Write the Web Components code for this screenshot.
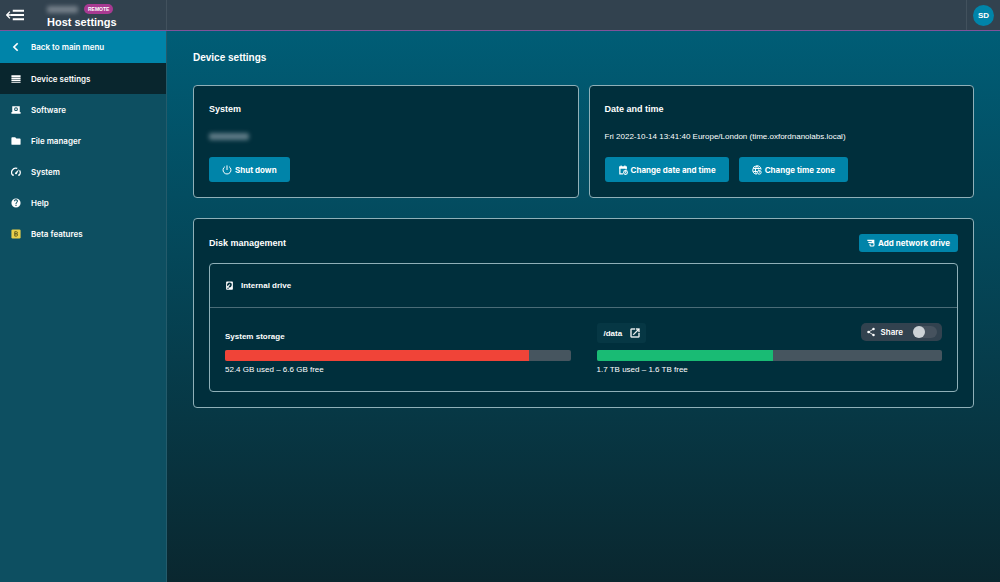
<!DOCTYPE html>
<html lang="en">
<head>
<meta charset="utf-8">
<meta name="viewport" content="width=device-width, initial-scale=1">
<title>Host settings</title>
<style>
    html, body {
        margin: 0;
        min-height: 100%;
    }

    body {
        font-family: "Liberation Sans", Arial, sans-serif;
        font-size: 9px;
        color: #fff;
        background: #0a2a33;
        --accent: #0084a9;
        --panel: #002f3c;
        --line: #8fb0b8;
        --slate: #32424f;
        --label-font: 600 8px/12px Inter, "Liberation Sans", sans-serif;
    }
</style>
</head>
<body>
<app-shell>
    <top-bar slot="header" user="SD" badge="Remote">Host settings</top-bar>

    <side-nav slot="nav">
        <nav-item icon="back" variant="back" href="#menu">Back to main menu</nav-item>
        <nav-item icon="list" variant="active" href="#device">Device settings</nav-item>
        <nav-item icon="laptop" href="#software">Software</nav-item>
        <nav-item icon="folder" href="#files">File manager</nav-item>
        <nav-item icon="gauge" href="#system">System</nav-item>
        <nav-item icon="help" href="#help">Help</nav-item>
        <nav-item icon="beta" href="#beta">Beta features</nav-item>
    </side-nav>

    <settings-page>
        <span slot="title">Device settings</span>

        <panel-card slot="top">
            <span slot="title">System</span>
            <redacted-text></redacted-text>
            <action-button slot="footer" icon="power">Shut down</action-button>
        </panel-card>

        <panel-card slot="top">
            <span slot="title">Date and time</span>
            Fri 2022-10-14 13:41:40 Europe/London (time.oxfordnanolabs.local)
            <action-button slot="footer" icon="calendar">Change date and time</action-button>
            <action-button slot="footer" icon="globe">Change time zone</action-button>
        </panel-card>

        <disk-panel>
            <span slot="title">Disk management</span>
            <action-button slot="action" icon="addDrive" compact>Add network drive</action-button>
            <drive-box>
                <span slot="name">Internal drive</span>
                <storage-volume used="88" color="#f04438" usage="52.4 GB used – 6.6 GB free">
                    <span slot="name">System storage</span>
                </storage-volume>
                <storage-volume used="51" color="#19bb74" usage="1.7 TB used – 1.6 TB free">
                    <path-link slot="name" href="#data">/data</path-link>
                    <share-toggle slot="action">Share</share-toggle>
                </storage-volume>
            </drive-box>
        </disk-panel>
    </settings-page>
</app-shell>

<script>
const ICONS = {
    menu: '<path d="M9 5h15v2.600H9zM6.500 10.700H24v2.600H6.500zM9 16.400h15V19H9z"/><path d="M5.200 7.500 1 12l4.200 4.500M1 12h8" fill="none" stroke="currentColor" stroke-width="1.800"/>',
    back: '<path d="M16 3 7 12l9 9" fill="none" stroke="currentColor" stroke-width="4"/>',
    list: '<path d="M1 3h22v4H1zM1 8.500h22v4H1zM1 14h22v3H1zM1 18.500h22V21H1z"/>',
    laptop: '<path fill-rule="evenodd" d="M3 3h18v14h2v4H1v-4h2zM12 5.500a4.500 4.500 0 1 0 0 9 4.500 4.500 0 0 0 0-9zm0 2.500a2 2 0 1 1 0 4 2 2 0 0 1 0-4z"/>',
    folder: '<path d="M3 3h7l3 3h8a2 2 0 0 1 2 2v11a2 2 0 0 1-2 2H3a2 2 0 0 1-2-2V5a2 2 0 0 1 2-2z"/>',
    gauge: '<path d="M4.500 20A10 10 0 0 1 15 3.500M20.500 8a10 10 0 0 1-1 12" fill="none" stroke="currentColor" stroke-width="3"/><path d="M19.500 4.500 14 16.500a2.500 2.500 0 1 1-4-3z"/><path d="M3 18h4v3H4zM17 18h4l-1 3h-3z"/>',
    help: '<path d="M12 1a11 11 0 1 0 0 22 11 11 0 0 0 0-22zm1.300 18h-2.600v-2.600h2.600zm2.600-9.200-1.100 1.100c-.9.900-1.500 1.700-1.500 3.700h-2.600V14c0-1.400.6-2.500 1.500-3.400l1.400-1.400a2.100 2.100 0 1 0-3.700-1.500H7.400a4.600 4.600 0 1 1 8.500 2.100z"/>',
    beta: '<rect x="1" y="1" width="22" height="22" rx="3" fill="#e8cf4a"/><path d="M9 6.500h4a2.500 2.500 0 0 1 0 5H9zm0 5h4.500a2.800 2.800 0 0 1 0 5.500H9z" fill="none" stroke="#5c5a1e" stroke-width="2.200"/>',
    power: '<path d="M12 1v11M7 4a9.500 9.500 0 1 0 10 0" fill="none" stroke="currentColor" stroke-width="2.400"/>',
    calendar: '<path d="M12 21H4.500V5h15v6" fill="none" stroke="currentColor" stroke-width="3"/><path d="M3 3.500h18V9H3zM6 1h3v4H6zM15 1h3v4h-3z"/><circle cx="18" cy="18" r="4.500" fill="none" stroke="currentColor" stroke-width="2.600"/><path d="M17 15h2v4h-2z"/>',
    globe: '<g fill="none" stroke="currentColor" stroke-width="2.400"><path d="M21.800 11A10 10 0 1 0 11 21.900"/><path d="M12 2c-5 5-5 15-1 20M12 2c3 3 4 6 4 9M3 8.500h18M3 15.500h9"/><circle cx="17.500" cy="17.500" r="4.500"/></g><path d="M16.500 14h2v4.500h-2z"/>',
    addDrive: '<path d="M1 2h21v4H1zM4 8h10v4H4z"/><path d="M14 6h8v6h-8z"/><path d="M10 11.500h8a3 3 0 0 1 3 3v3.500a3 3 0 0 1-3 3h-6a3 3 0 0 1-3-3v-4" fill="none" stroke="currentColor" stroke-width="3.200"/>',
    drive: '<path fill-rule="evenodd" d="M5 1h14a2 2 0 0 1 2 2v18a2 2 0 0 1-2 2H5a2 2 0 0 1-2-2V3a2 2 0 0 1 2-2zm7 3a6.500 6.500 0 0 0-5.500 10L10 10.500l2 1.500-3 4.500A6.500 6.500 0 1 0 12 4zm0 4.500a1.800 1.800 0 1 1 0 3.600 1.800 1.800 0 0 1 0-3.600zM6 18v2.500h4V18z"/>',
    open: '<path d="M14 3v2h3.600l-9.800 9.800 1.400 1.400L19 6.400V10h2V3zM19 19H5V5h7V3H5a2 2 0 0 0-2 2v14a2 2 0 0 0 2 2h14a2 2 0 0 0 2-2v-7h-2z" stroke="currentColor" stroke-width=".6"/>',
    share: '<path d="M18 5 6 12l12 7" fill="none" stroke="currentColor" stroke-width="2"/><circle cx="18" cy="5" r="3"/><circle cx="6" cy="12" r="3"/><circle cx="18" cy="19" r="3"/>'
};

// Base class: attaches an open root and fills it from the subclass's markup
class BaseElement extends HTMLElement {
    constructor() {
        super();
        this.attachShadow({ mode: 'open' });
    }

    connectedCallback() {
        this.shadowRoot.innerHTML = this.render();
    }
}

class UiIcon extends BaseElement {
    render() {
        return `
            <style>
                :host { display: inline-flex; flex: none; width: 10px; height: 10px; }
                svg { width: 100%; height: 100%; fill: currentColor; }
            </style>
            <svg viewBox="0 0 24 24" aria-hidden="true">${ICONS[this.getAttribute('name')]}</svg>
        `;
    }
}

class AppShell extends BaseElement {
    render() {
        return `
            <style>
                :host {
                    display: grid;
                    grid-template: auto 1fr / 167px minmax(0, 1fr);
                    min-height: 100vh;
                }
                header { grid-column: 1 / -1; }
                nav {
                    background: #0d4f61;
                    border-right: 1px solid #245b6b;
                }
                main {
                    padding: 20px 26px;
                    background: linear-gradient(#005d76, #0a272f);
                }
            </style>
            <header><slot name="header"></slot></header>
            <nav><slot name="nav"></slot></nav>
            <main><slot></slot></main>
        `;
    }
}

class TopBar extends BaseElement {
    render() {
        return `
            <style>
                :host {
                    display: flex;
                    height: 30px;
                    background: var(--slate);
                    border-bottom: 1px solid #80539a;
                }
                button {
                    border: 0;
                    padding: 0;
                    background: none;
                    color: inherit;
                    font: inherit;
                    cursor: pointer;
                }
                .brand {
                    display: flex;
                    flex: 0 0 166px;
                    border-right: 1px solid #42515d;
                }
                .menu {
                    display: flex;
                    align-items: center;
                    width: 47px;
                    padding-left: 6px;
                }
                .menu ui-icon { width: 18px; height: 18px; }
                .meta {
                    display: flex;
                    align-items: center;
                    gap: 6px;
                    height: 10px;
                    padding-top: 4px;
                }
                .badge {
                    padding: 0 4px;
                    border-radius: 5px;
                    background: #a83a92;
                    font-size: 5px;
                    font-weight: bold;
                    line-height: 10px;
                    text-transform: uppercase;
                }
                h1 {
                    margin: 0;
                    font-size: 11px;
                    line-height: 16px;
                }
                .account {
                    display: flex;
                    align-items: center;
                    margin-left: auto;
                    padding: 0 6px;
                    border-left: 1px solid #42515d;
                }
                .avatar {
                    width: 21px;
                    height: 21px;
                    border-radius: 50%;
                    background: var(--accent);
                    font-size: 8px;
                    font-weight: bold;
                }
            </style>
            <div class="brand">
                <button class="menu" aria-label="Collapse menu"><ui-icon name="menu"></ui-icon></button>
                <div>
                    <div class="meta">
                        <redacted-text small></redacted-text>
                        <span class="badge">${this.getAttribute('badge')}</span>
                    </div>
                    <h1><slot></slot></h1>
                </div>
            </div>
            <div class="account"><button class="avatar">${this.getAttribute('user')}</button></div>
        `;
    }
}

class RedactedText extends BaseElement {
    render() {
        return `
            <style>
                :host {
                    display: inline-block;
                    width: 40px;
                    height: 7px;
                    border-radius: 2px;
                    background: #5d7a85;
                    filter: blur(2px);
                }
                :host([small]) { width: 31px; background: #747f89; }
            </style>
        `;
    }
}

class SideNav extends BaseElement {
    render() {
        return `
            <style>
                :host { display: flex; flex-direction: column; }
            </style>
            <slot></slot>
        `;
    }
}

class NavItem extends BaseElement {
    render() {
        return `
            <style>
                :host { display: block; }
                a {
                    display: flex;
                    align-items: center;
                    gap: 10px;
                    height: 31px;
                    padding: 0 11px;
                    color: inherit;
                    font: var(--label-font);
                    text-decoration: none;
                }
                :host([variant="back"]) a { height: 32px; background: var(--accent); }
                :host([variant="active"]) a { background: #09262e; }
            </style>
            <a href="${this.getAttribute('href')}">
                <ui-icon name="${this.getAttribute('icon')}"></ui-icon>
                <slot></slot>
            </a>
        `;
    }
}

class SettingsPage extends BaseElement {
    render() {
        return `
            <style>
                :host { display: block; }
                h2 {
                    margin: 0 0 20px;
                    font-size: 10px;
                    line-height: 14px;
                }
                .top {
                    display: grid;
                    grid-template-columns: 1fr 1fr;
                    gap: 10px;
                    margin-bottom: 20px;
                }
            </style>
            <h2><slot name="title"></slot></h2>
            <div class="top"><slot name="top"></slot></div>
            <slot></slot>
        `;
    }
}

class PanelCard extends BaseElement {
    render() {
        return `
            <style>
                :host {
                    display: block;
                    padding: 15px;
                    border: 1px solid var(--line);
                    border-radius: 4px;
                    background: var(--panel);
                }
                h3 {
                    margin: 0 0 13px;
                    font-size: 9px;
                    line-height: 16px;
                }
                .body {
                    display: flex;
                    align-items: center;
                    height: 12px;
                    margin-bottom: 15px;
                    font-size: 8px;
                }
                .footer { display: flex; gap: 10px; }
            </style>
            <h3><slot name="title"></slot></h3>
            <div class="body"><slot></slot></div>
            <div class="footer"><slot name="footer"></slot></div>
        `;
    }
}

class ActionButton extends BaseElement {
    render() {
        return `
            <style>
                :host { display: inline-flex; }
                button {
                    display: flex;
                    align-items: center;
                    gap: 3px;
                    height: 25px;
                    padding: 0 13px;
                    border: 0;
                    border-radius: 3px;
                    background: var(--accent);
                    color: inherit;
                    font: var(--label-font);
                    font-weight: bold;
                    cursor: pointer;
                }
                :host([compact]) button { height: 18px; padding: 0 8px; }
                :host([compact]) ui-icon { width: 8px; height: 8px; }
            </style>
            <button>
                <ui-icon name="${this.getAttribute('icon')}"></ui-icon>
                <slot></slot>
            </button>
        `;
    }
}

class DiskPanel extends BaseElement {
    render() {
        return `
            <style>
                :host {
                    display: block;
                    padding: 15px;
                    border: 1px solid var(--line);
                    border-radius: 4px;
                    background: var(--panel);
                }
                .head {
                    display: flex;
                    align-items: center;
                    justify-content: space-between;
                    margin-bottom: 11px;
                }
                h3 { margin: 0; font-size: 9px; }
            </style>
            <div class="head">
                <h3><slot name="title"></slot></h3>
                <slot name="action"></slot>
            </div>
            <slot></slot>
        `;
    }
}

class DriveBox extends BaseElement {
    render() {
        return `
            <style>
                :host {
                    display: block;
                    border: 1px solid var(--line);
                    border-radius: 4px;
                }
                .name {
                    display: flex;
                    align-items: center;
                    gap: 7px;
                    height: 43px;
                    margin: 0;
                    padding: 0 15px;
                    border-bottom: 1px solid #4a6c77;
                    font-size: 8px;
                }
                .volumes {
                    display: grid;
                    grid-template-columns: 1fr 1fr;
                    gap: 26px;
                    padding: 15px;
                }
                .name ui-icon { width: 9px; height: 9px; }
            </style>
            <h4 class="name"><ui-icon name="drive"></ui-icon><slot name="name"></slot></h4>
            <div class="volumes"><slot></slot></div>
        `;
    }
}

class StorageVolume extends BaseElement {
    render() {
        return `
            <style>
                :host { display: block; font-size: 8px; }
                .head {
                    display: flex;
                    align-items: center;
                    justify-content: space-between;
                    height: 27px;
                    font-weight: bold;
                }
                progress {
                    display: block;
                    width: 100%;
                    height: 11px;
                    border: 0;
                    border-radius: 2px;
                    overflow: hidden;
                    appearance: none;
                    background: #46555f;
                }
                progress::-webkit-progress-bar { background: #46555f; }
                progress::-webkit-progress-value { background: ${this.getAttribute('color')}; }
                p { margin: 3px 0 0; line-height: 12px; }
            </style>
            <div class="head"><slot name="name"></slot><slot name="action"></slot></div>
            <progress max="100" value="${this.getAttribute('used')}" aria-label="Space used"></progress>
            <p>${this.getAttribute('usage')}</p>
        `;
    }
}

class PathLink extends BaseElement {
    render() {
        return `
            <style>
                :host { display: block; align-self: flex-start; }
                a {
                    display: flex;
                    align-items: center;
                    gap: 7px;
                    height: 20px;
                    padding: 0 5px 0 7px;
                    border-radius: 3px;
                    background: #063744;
                    color: inherit;
                    text-decoration: none;
                }
                ui-icon { width: 12px; height: 12px; }
            </style>
            <a href="${this.getAttribute('href')}"><slot></slot><ui-icon name="open"></ui-icon></a>
        `;
    }
}

class ShareToggle extends BaseElement {
    render() {
        return `
            <style>
                :host { display: block; align-self: flex-start; }
                label {
                    display: flex;
                    align-items: center;
                    gap: 5px;
                    height: 18px;
                    padding: 0 5px;
                    border-radius: 5px;
                    background: var(--slate);
                    font: var(--label-font);
                }
                input {
                    display: flex;
                    align-items: center;
                    width: 24px;
                    height: 12px;
                    margin: 0 0 0 5px;
                    border-radius: 6px;
                    appearance: none;
                    background: #46525e;
                }
                input::before {
                    content: "";
                    width: 12px;
                    height: 12px;
                    border-radius: 50%;
                    background: #ccd2d6;
                }
                input:checked { justify-content: flex-end; background: var(--accent); }
            </style>
            <label><ui-icon name="share"></ui-icon><slot></slot><input type="checkbox" role="switch"></label>
        `;
    }
}

customElements.define('ui-icon', UiIcon);
customElements.define('app-shell', AppShell);
customElements.define('top-bar', TopBar);
customElements.define('redacted-text', RedactedText);
customElements.define('side-nav', SideNav);
customElements.define('nav-item', NavItem);
customElements.define('settings-page', SettingsPage);
customElements.define('panel-card', PanelCard);
customElements.define('action-button', ActionButton);
customElements.define('disk-panel', DiskPanel);
customElements.define('drive-box', DriveBox);
customElements.define('storage-volume', StorageVolume);
customElements.define('path-link', PathLink);
customElements.define('share-toggle', ShareToggle);
</script>
</body>
</html>
